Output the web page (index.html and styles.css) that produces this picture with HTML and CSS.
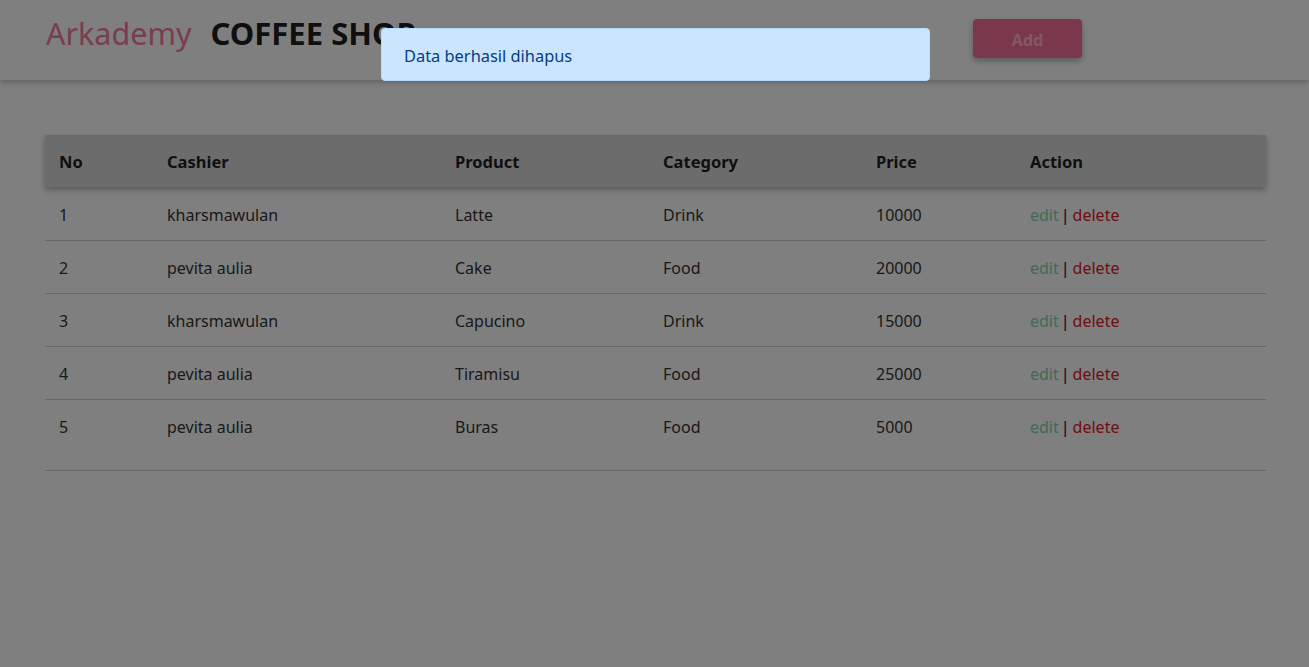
FILE: index.html
```html
<!DOCTYPE html>
<html>
<head>
<meta charset="utf-8">
<link rel="stylesheet" href="styles.css">
</head>
<body>
<header class="navbar">
  <div class="brand">
    <span class="brand-name">Arkademy</span>
    <span class="brand-title">COFFEE SHOP</span>
  </div>
  <button class="btn-add">Add</button>
</header>
<main class="content">
  <table class="data-table">
    <thead>
      <tr>
        <th class="c-no">No</th>
        <th class="c-cashier">Cashier</th>
        <th class="c-product">Product</th>
        <th class="c-category">Category</th>
        <th class="c-price">Price</th>
        <th class="c-action">Action</th>
      </tr>
    </thead>
    <tbody>
      <tr><td>1</td><td>kharsmawulan</td><td>Latte</td><td>Drink</td><td>10000</td><td><a class="edit">edit</a><span class="sep">|</span><a class="del">delete</a></td></tr>
      <tr><td>2</td><td>pevita aulia</td><td>Cake</td><td>Food</td><td>20000</td><td><a class="edit">edit</a><span class="sep">|</span><a class="del">delete</a></td></tr>
      <tr><td>3</td><td>kharsmawulan</td><td>Capucino</td><td>Drink</td><td>15000</td><td><a class="edit">edit</a><span class="sep">|</span><a class="del">delete</a></td></tr>
      <tr><td>4</td><td>pevita aulia</td><td>Tiramisu</td><td>Food</td><td>25000</td><td><a class="edit">edit</a><span class="sep">|</span><a class="del">delete</a></td></tr>
      <tr class="last"><td>5</td><td>pevita aulia</td><td>Buras</td><td>Food</td><td>5000</td><td><a class="edit">edit</a><span class="sep">|</span><a class="del">delete</a></td></tr>
    </tbody>
  </table>
</main>
<div class="backdrop"></div>
<div class="alert">Data berhasil dihapus</div>
</body>
</html>
```
FILE: styles.css
```css
* { box-sizing: border-box; }
html, body { margin: 0; padding: 0; }
body {
  font-family: "Noto Sans", "Open Sans", sans-serif;
  background: #ffffff;
  color: #212529;
  width: 1309px;
  height: 667px;
  overflow: hidden;
}
.navbar {
  height: 80px;
  display: flex;
  align-items: flex-start;
  padding: 0 0 0 46px;
  background: #fff;
  box-shadow: 0 2px 6px rgba(0,0,0,0.25);
}
.brand {
  display: flex;
  align-items: baseline;
  gap: 19px;
  padding-top: 12px;
  width: 927px;
}
.brand-name {
  font-size: 30.5px;
  color: #f07aa0;
  font-weight: 400;
}
.brand-title {
  font-size: 31px;
  font-weight: 700;
  color: #1e1e1e;
}
.btn-add {
  margin-top: 19px;
  width: 109px;
  height: 39px;
  padding-top: 3px;
  border: none;
  border-radius: 4px;
  background: #f76f96;
  color: #ffffff80;
  font-family: inherit;
  font-weight: 700;
  font-size: 16px;
  box-shadow: 0 3px 6px rgba(0,0,0,0.3);
}
.content {
  padding: 55px 43px 0 45px;
}
.data-table {
  width: 1221px;
  border-collapse: collapse;
  font-size: 16px;
  table-layout: fixed;
}
.data-table thead tr {
  background: #d9d9d9;
  box-shadow: 0 3px 6px rgba(0,0,0,0.3);
}
.data-table th {
  text-align: left;
  font-weight: 700;
  font-size: 16.5px;
  height: 52px;
  padding: 0 14px;
  color: #1e1e1e;
}
.c-no { width: 108px; }
.c-cashier { width: 288px; }
.c-product { width: 208px; }
.c-category { width: 213px; }
.c-price { width: 154px; }
.c-action { width: 250px; }
.data-table td {
  height: 53px;
  padding: 3px 14px 0;
  border-bottom: 1px solid #cfcfcf;
  color: #333;
}
.data-table tr.last td {
  height: 71px;
  padding-bottom: 18px;
}
.edit { color: #7fd6b0; }
.sep { color: #000040; margin: 0 3px 0 2px; }
.del { color: #e02020; }
.backdrop {
  position: fixed;
  inset: 0;
  background: rgba(0,0,0,0.5);
}
.alert {
  position: fixed;
  left: 381px;
  top: 28px;
  width: 549px;
  height: 53px;
  padding: 2px 22px 0;
  display: flex;
  align-items: center;
  background: #cce5ff;
  border: 1px solid #b8daff;
  border-radius: 4px;
  color: #004085;
  font-size: 16.4px;
}
```
